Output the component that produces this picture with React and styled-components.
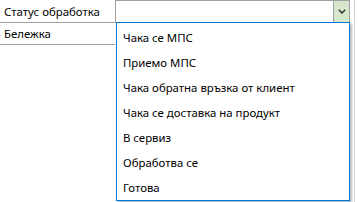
import React from "react";
import styled, { createGlobalStyle } from "styled-components";

const Global = createGlobalStyle`
  html, body { margin: 0; padding: 0; background: #ffffff; }
  body { font-family: "Noto Sans", "Open Sans", sans-serif; font-size: 11.4px; color: #000; }
`;

const Page = styled.div`
  position: relative;
  width: 358px;
  height: 202px;
  overflow: hidden;
  background: #fff;
`;

const Table = styled.div`
  width: 354px;
  height: 202px;
  border-right: 1px solid #d4d4d4;
  display: flex;
  flex-direction: column;
`;

const Row = styled.div`
  display: flex;
  height: ${(p) => p.$h}px;
`;

const Label = styled.div`
  width: 115px;
  box-sizing: border-box;
  border-bottom: 1px solid #a0a0a0;
  padding-left: 4px;
  display: flex;
  align-items: center;
  white-space: nowrap;
`;

const Combo = styled.div`
  width: 235px;
  box-sizing: border-box;
  border: 1px solid #a0a0a0;
  display: flex;
  justify-content: flex-end;
  background: #fff;
`;

const ComboButton = styled.div`
  width: 16px;
  box-sizing: border-box;
  border-left: 1px solid #a0a0a0;
  background: #d6e7cd;
  display: flex;
  align-items: center;
  justify-content: center;
`;

const Dropdown = styled.ul`
  position: absolute;
  left: 116px;
  top: 22px;
  width: 234px;
  height: 179px;
  box-sizing: border-box;
  margin: 0;
  padding: 2px 0 0 0;
  list-style: none;
  background: #fff;
  border: 1px solid #0078d7;
  box-shadow: 2px 2px 2px rgba(0, 0, 0, 0.28);
`;

const Item = styled.li`
  height: 25px;
  padding-left: 6px;
  display: flex;
  align-items: center;
  white-space: nowrap;
`;

const items = [
  "Чака се МПС",
  "Приемо МПС",
  "Чака обратна връзка от клиент",
  "Чака се доставка на продукт",
  "В сервиз",
  "Обработва се",
  "Готова",
];

export default function App() {
  return (
    <Page>
      <Global />
      <Table>
        <Row $h={23}>
          <Label>Статус обработка</Label>
          <Combo>
            <ComboButton>
              <svg width="8" height="5" viewBox="0 0 8 5">
                <path d="M0.8 0.8 L4 4 L7.2 0.8" fill="none" stroke="#333" strokeWidth="1.5" />
              </svg>
            </ComboButton>
          </Combo>
        </Row>
        <Row $h={22}>
          <Label>Бележка</Label>
        </Row>
      </Table>
      <Dropdown>
        {items.map((t) => (
          <Item key={t}>{t}</Item>
        ))}
      </Dropdown>
    </Page>
  );
}
